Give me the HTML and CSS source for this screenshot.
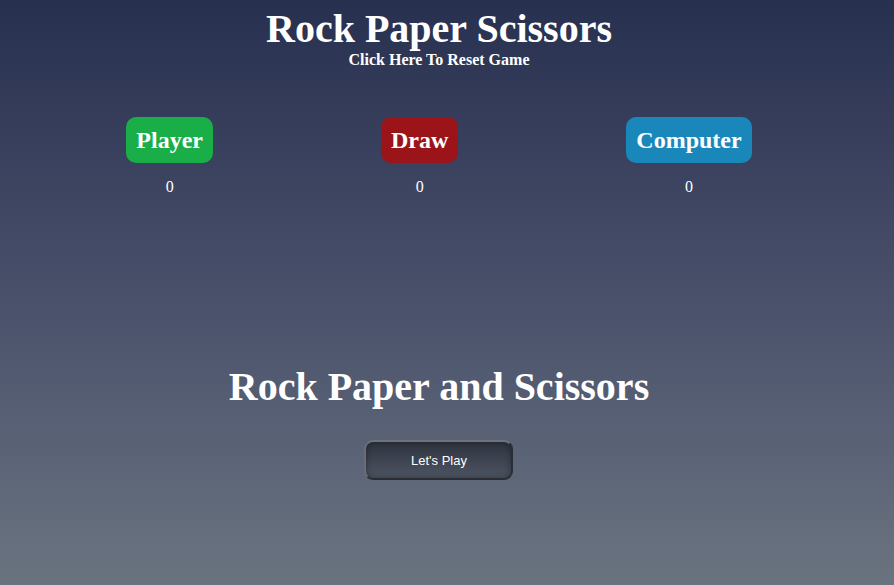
FILE: index.html
```html
<!DOCTYPE html>
<html>
<head>
<meta charset="utf-8">
<link rel="stylesheet" href="styles.css">
</head>
<body>
<div class="page">
  <header class="top">
    <h1 class="title">Rock Paper Scissors</h1>
    <div class="reset">Click Here To Reset Game</div>
  </header>
  <section class="scores">
    <div class="score">
      <div class="badge badge-player">Player</div>
      <div class="num">0</div>
    </div>
    <div class="score">
      <div class="badge badge-draw">Draw</div>
      <div class="num">0</div>
    </div>
    <div class="score">
      <div class="badge badge-computer">Computer</div>
      <div class="num">0</div>
    </div>
  </section>
  <section class="game">
    <h2 class="heading">Rock Paper and Scissors</h2>
    <button class="play">Let's Play</button>
  </section>
</div>
</body>
</html>
```

FILE: styles.css
```css
html, body {
  margin: 0;
  padding: 0;
  height: 100%;
}
body {
  background: linear-gradient(180deg, #283050 0%, #48506a 50%, #6a7480 100%);
  color: #fff;
  font-family: "Liberation Serif", "Times New Roman", serif;
  overflow: hidden;
}
.page {
  width: 878px;
  padding-right: 16px;
  display: flex;
  flex-direction: column;
  align-items: center;
}
.top {
  display: flex;
  flex-direction: column;
  align-items: center;
  padding-top: 7px;
}
.title {
  margin: 0;
  font-size: 40px;
  line-height: 44px;
  font-weight: bold;
}
.reset {
  font-size: 16px;
  font-weight: bold;
  line-height: 18px;
  margin-top: 0;
}
.scores {
  display: flex;
  justify-content: center;
  gap: 168px;
  margin-top: 48px;
}
.score {
  display: flex;
  flex-direction: column;
  align-items: center;
}
.badge {
  height: 46px;
  line-height: 46px;
  padding: 0 10px;
  border-radius: 10px;
  font-size: 24px;
  font-weight: bold;
}
.badge-player { background: #1aae48; }
.badge-draw { background: #9b1419; }
.badge-computer { background: #1a87bb; }
.num {
  margin-top: 15px;
  font-size: 16px;
  line-height: 18px;
}
.game {
  display: flex;
  flex-direction: column;
  align-items: center;
  margin-top: 168px;
}
.heading {
  margin: 0;
  font-size: 40px;
  line-height: 46px;
  font-weight: bold;
}
.play {
  margin-top: 30px;
  width: 149px;
  height: 40px;
  border-radius: 9px;
  border: 2px solid;
  border-color: #707379 #2a2d34 #2a2d34 #6a6d74;
  background: linear-gradient(180deg, #2e333f 0%, #3f4553 55%, #4d5462 100%);
  box-shadow: inset 0 0 6px rgba(0,0,0,0.35);
  color: #fff;
  font-family: "Liberation Sans", Arial, sans-serif;
  font-size: 13px;
}
```
